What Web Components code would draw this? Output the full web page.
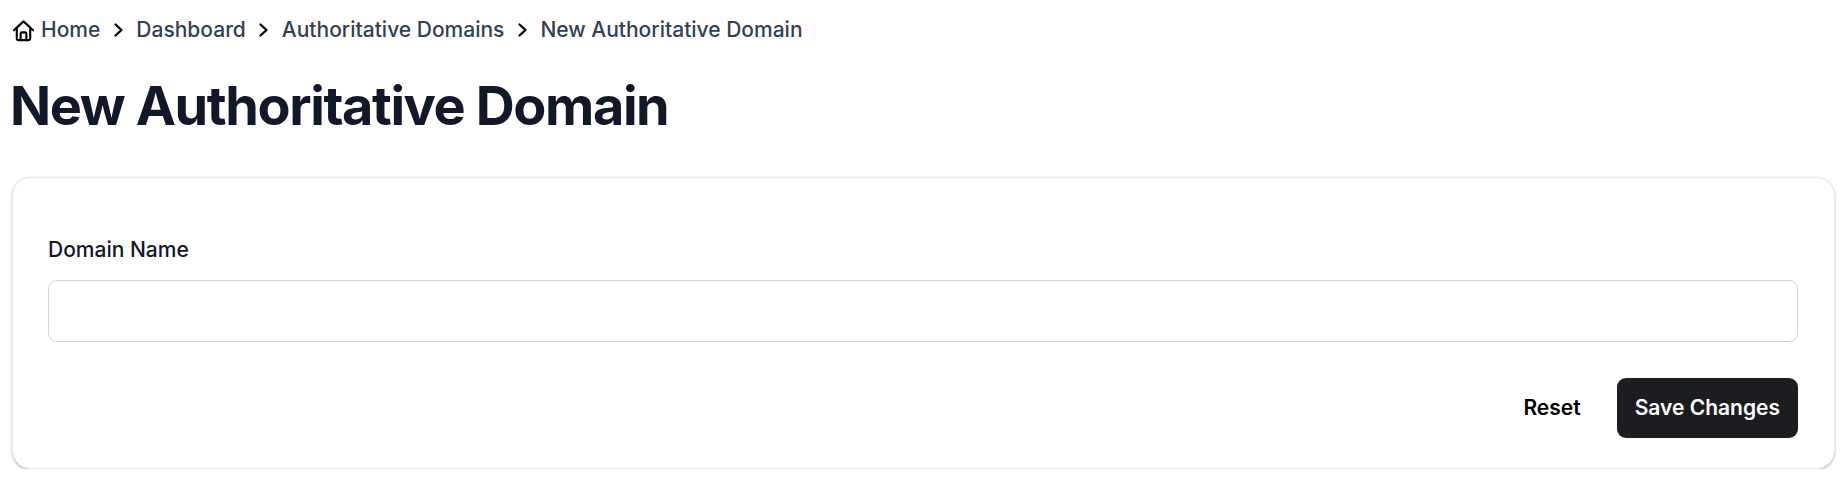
<!DOCTYPE html>
<html lang="en">
<head>
<meta charset="utf-8">
<title>New Authoritative Domain</title>
<style>
    html, body { margin: 0; background: #fff; }
    body { font-family: Inter, "Liberation Sans", sans-serif; }
</style>
</head>
<body>
<domain-page>
    <bread-crumbs>
        <crumb-item home>Home</crumb-item>
        <crumb-item>Dashboard</crumb-item>
        <crumb-item>Authoritative Domains</crumb-item>
        <crumb-item>New Authoritative Domain</crumb-item>
    </bread-crumbs>
    <page-title>New Authoritative Domain</page-title>
    <domain-form></domain-form>
</domain-page>
<script>
class DomainPage extends HTMLElement {
    constructor() {
        super();
        this.attachShadow({ mode: 'open' });
        this.shadowRoot.innerHTML = `
            <style>
                :host {
                    display: flex;
                    flex-direction: column;
                    padding: 15px 13px 0 12px;
                }
            </style>
            <slot></slot>
        `;
    }
}

class BreadCrumbs extends HTMLElement {
    constructor() {
        super();
        this.attachShadow({ mode: 'open' });
        this.shadowRoot.innerHTML = `
            <style>
                :host {
                    display: flex;
                    align-items: center;
                    height: 28px;
                    font-size: 21px;
                    font-weight: 500;
                    color: #334155;
                }
            </style>
            <slot></slot>
        `;
    }
}

class CrumbItem extends HTMLElement {
    constructor() {
        super();
        this.attachShadow({ mode: 'open' });
        const home = `<svg class="home" viewBox="0 0 24 24" fill="none" stroke="#000" stroke-width="2.2" stroke-linecap="round" stroke-linejoin="round"><path d="M2 11.8 12 2.5l10 9.3"/><path d="M5 9.5V20a2 2 0 0 0 2 2h10a2 2 0 0 0 2-2V9.5"/><path d="M9 22v-6.5a1.5 1.5 0 0 1 1.5-1.5h3a1.5 1.5 0 0 1 1.5 1.5V22"/></svg>`;
        const chevron = `<svg class="sep" viewBox="0 0 12 16" fill="none" stroke="#000" stroke-width="2.3" stroke-linecap="round" stroke-linejoin="round"><path d="M2.5 2.5 8.5 8l-6 5.5"/></svg>`;
        this.shadowRoot.innerHTML = `
            <style>
                :host { display: flex; align-items: center; white-space: nowrap; }
                .home { width: 23px; height: 23px; margin-right: 6px; position: relative; top: 1px; }
                .sep { width: 12px; height: 16px; margin: 0 11.5px 0 12.5px; position: relative; top: 1px; }
            </style>
            ${this.hasAttribute('home') ? home : chevron}
            <slot></slot>
        `;
    }
}

class PageTitle extends HTMLElement {
    constructor() {
        super();
        this.attachShadow({ mode: 'open' });
        this.shadowRoot.innerHTML = `
            <style>
                :host {
                    display: block;
                    margin: 25px 0 33px -2px;
                    font-size: 54px;
                    line-height: 76px;
                    font-weight: 700;
                    letter-spacing: -0.026em;
                    color: #111827;
                    white-space: nowrap;
                }
            </style>
            <slot></slot>
        `;
    }
}

class DomainForm extends HTMLElement {
    constructor() {
        super();
        this.attachShadow({ mode: 'open' });
        this.shadowRoot.innerHTML = `
            <style>
                :host {
                    display: block;
                    box-sizing: border-box;
                    height: 292px;
                    padding: 58px 36px 30px 35px;
                    background: #fff;
                    border: 1px solid #ebebeb;
                    border-radius: 19px;
                    box-shadow: 0 2px 3px rgba(0, 0, 0, 0.18), 0 0 2px rgba(0, 0, 0, 0.1);
                }
                label {
                    display: block;
                    font-size: 21px;
                    line-height: 28px;
                    font-weight: 500;
                    color: #111827;
                    margin-bottom: 16px;
                }
                input {
                    display: block;
                    box-sizing: border-box;
                    width: 100%;
                    height: 62px;
                    border: 1px solid #d1d5db;
                    border-radius: 9px;
                    outline: none;
                }
                .actions {
                    display: flex;
                    justify-content: flex-end;
                    align-items: center;
                    gap: 18px;
                    margin-top: 36px;
                }
                button {
                    height: 60px;
                    border: 0;
                    border-radius: 9px;
                    font: 600 21px Inter, "Liberation Sans", sans-serif;
                    padding: 0 18px 2px;
                }
                .reset { background: none; color: #000; }
                .save { background: #1c1d21; color: #fff; }
            </style>
            <label for="name">Domain Name</label>
            <input id="name" type="text">
            <div class="actions">
                <button class="reset" type="reset">Reset</button>
                <button class="save" type="submit">Save Changes</button>
            </div>
        `;
    }
}

customElements.define('domain-page', DomainPage);
customElements.define('bread-crumbs', BreadCrumbs);
customElements.define('crumb-item', CrumbItem);
customElements.define('page-title', PageTitle);
customElements.define('domain-form', DomainForm);
</script>
</body>
</html>
